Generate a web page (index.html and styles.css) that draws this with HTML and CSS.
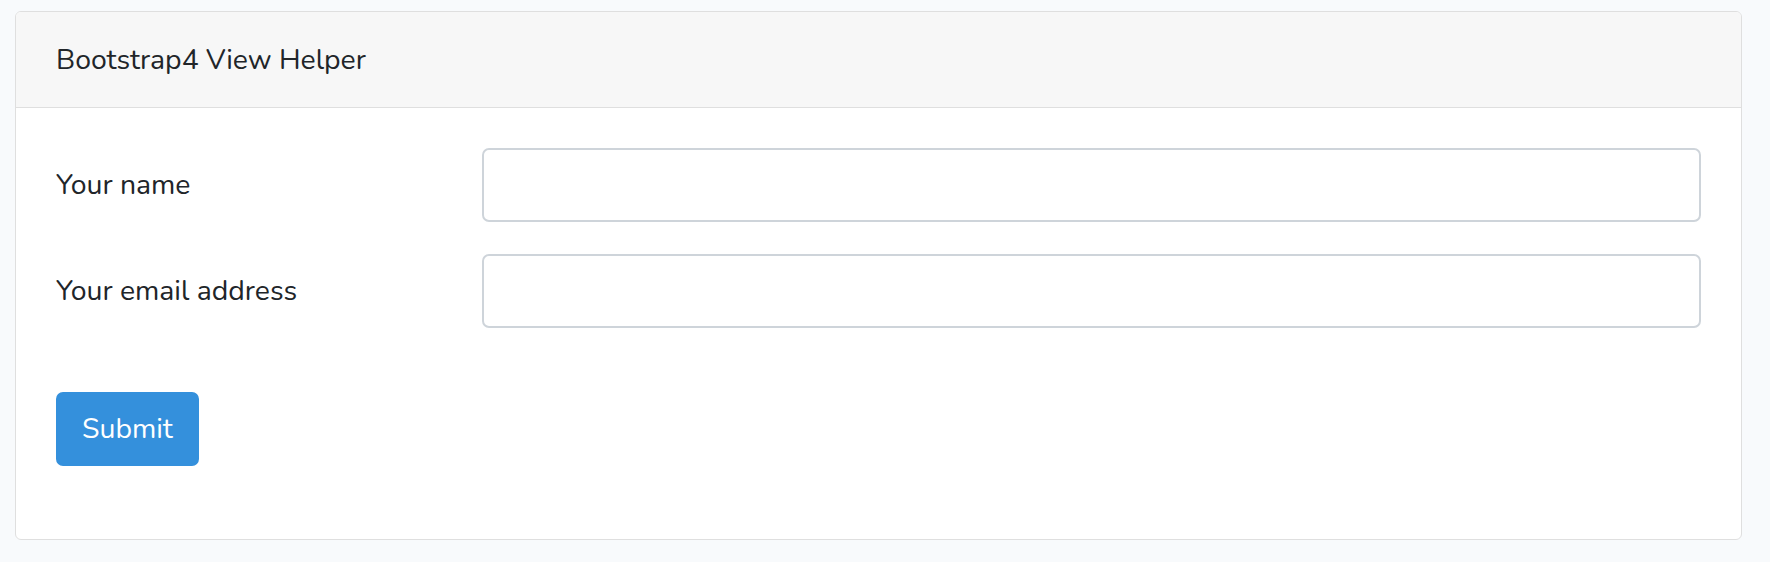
FILE: index.html
```html
<!DOCTYPE html>
<html>
<head>
<meta charset="utf-8">
<link rel="stylesheet" href="styles.css">
</head>
<body>
<div class="card">
  <div class="card-header">Bootstrap4 View Helper</div>
  <div class="card-body">
    <form class="form">
      <div class="form-row">
        <label class="label">Your name</label>
        <div class="field"><input class="input" type="text"></div>
      </div>
      <div class="form-row">
        <label class="label">Your email address</label>
        <div class="field"><input class="input" type="email"></div>
      </div>
      <div class="form-row actions">
        <button class="btn" type="button">Submit</button>
      </div>
    </form>
  </div>
</div>
</body>
</html>
```
FILE: styles.css
```css
html, body {
  margin: 0;
  padding: 0;
}
body {
  background: #f8fafc;
  font-family: "Nunito", Lato, "Open Sans", sans-serif;
  font-size: 28.4px;
  line-height: 46px;
  color: #212529;
  padding: 11px 28px 0 15px;
}
.card {
  background: #fff;
  border: 1px solid #dfdfdf;
  border-radius: 6px;
  overflow: hidden;
}
.card-header {
  background: #f7f7f7;
  border-bottom: 1px solid #dfdfdf;
  padding: 25px 40px 24px;
}
.card-body {
  padding: 40px 40px 41px;
}
.form-row {
  display: grid;
  grid-template-columns: 396px 1fr;
  column-gap: 30px;
  align-items: center;
  margin-bottom: 32px;
}
.actions {
  display: flex;
  margin-top: 64px;
}
.label {
  padding: 0;
}
.input {
  display: block;
  box-sizing: border-box;
  width: 100%;
  height: 74px;
  border: 2px solid #ced4da;
  border-radius: 7px;
  background: #fff;
  font: inherit;
  margin: 0;
}
.btn {
  box-sizing: border-box;
  height: 74px;
  padding: 0 24px;
  background: #3490dc;
  border: 2px solid #3490dc;
  border-radius: 7px;
  color: #fff;
  font: inherit;
  cursor: pointer;
}
```
